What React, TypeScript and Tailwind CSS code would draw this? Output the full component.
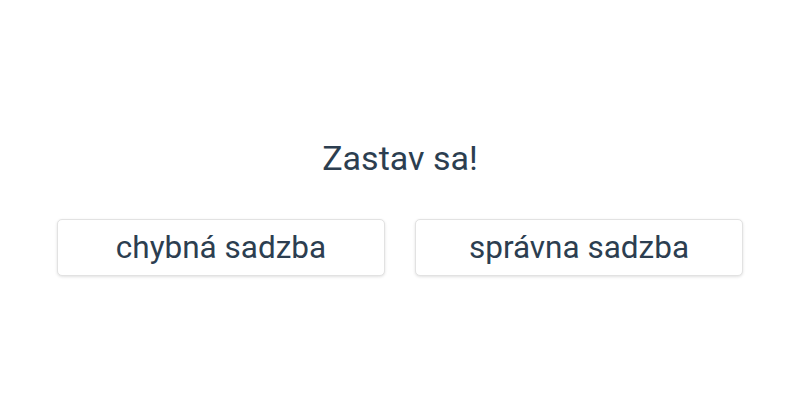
export default function App() {
  return (
    <div className="flex h-[400px] w-[800px] flex-col items-center bg-white pt-[136px] font-['Roboto',sans-serif] text-[#2c3e50]">
      <h1 className="text-[34px] leading-[44px]">Zastav sa!</h1>
      <div className="mt-[39px] flex gap-[30px]">
        <button className="h-[57px] w-[328px] rounded-[5px] border border-[#e2e2e2] bg-white text-[31.5px] text-[#2c3e50] shadow-[0_1px_3px_rgba(0,0,0,0.12)]">
          chybná sadzba
        </button>
        <button className="h-[57px] w-[328px] rounded-[5px] border border-[#e2e2e2] bg-white text-[31.5px] text-[#2c3e50] shadow-[0_1px_3px_rgba(0,0,0,0.12)]">
          správna sadzba
        </button>
      </div>
    </div>
  );
}
